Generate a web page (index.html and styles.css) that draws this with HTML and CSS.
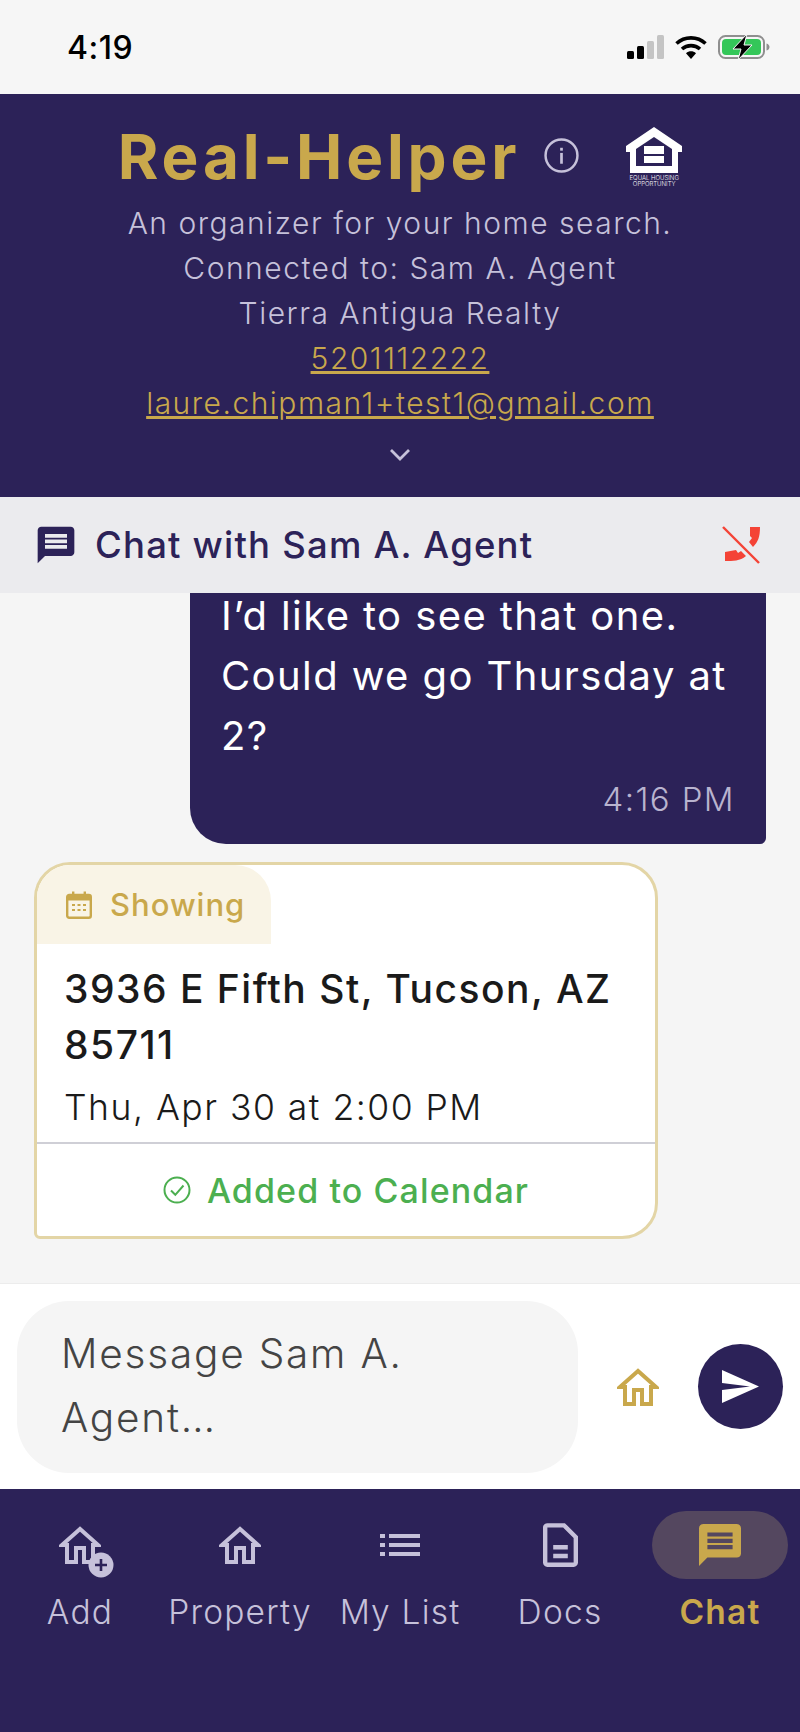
FILE: index.html
```html
<!DOCTYPE html>
<html lang="en">
<head>
    <meta charset="UTF-8">
    <title>Real-Helper | Chat</title>
    <link rel="stylesheet" href="styles.css">
</head>
<body>

<!-- Status bar -->
<div class="status-bar">
    <span class="status-time">4:19</span>
    <div class="status-icons">
        <svg class="signal" viewBox="0 0 37 24" width="37" height="24">
            <rect x="0" y="16" width="7" height="8" rx="1.5" fill="#000"/>
            <rect x="10" y="11" width="7" height="13" rx="1.5" fill="#000"/>
            <rect x="20" y="6" width="7" height="18" rx="1.5" fill="#c4c4c4"/>
            <rect x="30" y="0" width="7" height="24" rx="1.5" fill="#c4c4c4"/>
        </svg>
        <svg class="wifi" viewBox="0 0 32 24" width="32" height="24">
            <path d="M1.5 8.5C9.5 1 22.5 1 30.5 8.5" fill="none" stroke="#000" stroke-width="3.6"/>
            <path d="M7 14C12 9.5 20 9.5 25 14" fill="none" stroke="#000" stroke-width="3.6"/>
            <path d="M11 18.2C14 15.6 18 15.6 21 18.2L16 24Z" fill="#000"/>
        </svg>
        <svg class="battery" viewBox="0 0 52 26" width="52" height="26">
            <rect x="1" y="2" width="45" height="22" rx="6.5" fill="none" stroke="#8f8f8f" stroke-width="2"/>
            <rect x="4" y="5" width="39" height="16" rx="4" fill="#34c759"/>
            <path d="M48.5 9.5c2 .5 3 2 3 3.500s-1 3-3 3.500z" fill="#8f8f8f"/>
            <path d="M29 0L15 15h8l-3 11 14-15h-8z" fill="#000" stroke="#f6f6f6" stroke-width="1"/>
        </svg>
    </div>
</div>

<!-- Agent header -->
<header class="agent-header">
    <div class="title-row">
        <h1>Real-Helper</h1>
        <svg class="info-icon" viewBox="0 0 34 34" width="35" height="35">
            <circle cx="17" cy="17" r="15.500" fill="none" stroke="#c6c1da" stroke-width="2.400"/>
            <rect x="15.700" y="14.500" width="2.600" height="10.500" fill="#c6c1da"/>
            <rect x="15.700" y="9.500" width="2.600" height="2.800" fill="#c6c1da"/>
        </svg>
        <div class="fair-housing">
            <svg viewBox="0 0 56 46" width="56" height="46">
                <path d="M28 0L56 19v6h-4v21H4V25H0v-6z" fill="#fff"/>
                <path d="M28 10L10 22v17h36V22z" fill="#2c2258"/>
                <rect x="18" y="19" width="20" height="8" fill="#fff"/>
                <rect x="18" y="29" width="20" height="7" fill="#fff"/>
            </svg>
            <span>EQUAL HOUSING<br>OPPORTUNITY</span>
        </div>
    </div>
    <p>An organizer for your home search.</p>
    <p>Connected to: Sam A. Agent</p>
    <p>Tierra Antigua Realty</p>
    <p><a href="#">5201112222</a></p>
    <p><a href="#">laure.chipman1+test1@gmail.com</a></p>
    <svg class="chevron" viewBox="0 0 22 13" width="22" height="13">
        <path d="M2 2l9 9 9-9" fill="none" stroke="#c6c1da" stroke-width="2.800"/>
    </svg>
</header>

<!-- Chat title -->
<div class="chat-title">
    <svg viewBox="0 0 24 24" width="44" height="44">
        <path fill="#2c2258" d="M20 2H4c-1.100 0-1.990.9-1.990 2L2 22l4-4h14c1.100 0 2-.9 2-2V4c0-1.100-.9-2-2-2zm-2 12H6v-2h12v2zm0-3H6V9h12v2zm0-3H6V6h12v2z"/>
    </svg>
    <span class="chat-name">Chat with Sam A. Agent</span>
    <svg class="phone-off" viewBox="22 16 40 40" width="40" height="40">
        <path fill="#f44336" d="M50 18h10c0 10-2 15-7 20l-4-5 3-4-2-2zM25 43l11-2 2 3 3-2 5 5c-6 5-13 5-21 5z"/>
        <path d="M23 18l36 36" fill="none" stroke="#f44336" stroke-width="2.400"/>
    </svg>
</div>

<!-- Messages -->
<main class="messages">
    <div class="bubble">
        <p>I’d like to see that one. Could we go Thursday at 2?</p>
        <span class="bubble-time">4:16 PM</span>
    </div>
    <div class="showing-card">
        <div class="showing-tag">
            <svg viewBox="0 0 26 28" width="26" height="28">
                <rect x="1.200" y="4" width="23.600" height="22.800" rx="2" fill="none" stroke="#c9a84c" stroke-width="2.400"/>
                <rect x="1.200" y="4" width="23.600" height="5.500" fill="#c9a84c"/>
                <rect x="6" y="0.500" width="2.400" height="5" fill="#c9a84c"/>
                <rect x="17.600" y="0.500" width="2.400" height="5" fill="#c9a84c"/>
                <path d="M6 14h3M11.500 14h3M17 14h3M6 19h3M11.500 19h3M17 19h3" stroke="#c9a84c" stroke-width="2" fill="none"/>
            </svg>
            <span>Showing</span>
        </div>
        <div class="showing-body">
            <div class="showing-address">3936 E Fifth St, Tucson, AZ 85711</div>
            <div class="showing-date">Thu, Apr 30 at 2:00 PM</div>
        </div>
        <div class="showing-status">
            <svg viewBox="0 0 28 28" width="28" height="28">
                <circle cx="14" cy="14" r="12.500" fill="none" stroke="#4caf50" stroke-width="2"/>
                <path d="M8 14.500l4.300 4.300L20.500 9.500" fill="none" stroke="#4caf50" stroke-width="2"/>
            </svg>
            <span>Added to Calendar</span>
        </div>
    </div>
</main>

<!-- Composer -->
<div class="composer">
    <div class="composer-input">Message Sam A. Agent…</div>
    <svg class="composer-home" viewBox="0 0 42 38" width="42" height="38">
        <path d="M21 3L3 19h5v17h9V22h8v14h9V19h5z" fill="none" stroke="#c9a84c" stroke-width="4"/>
    </svg>
    <div class="send-button">
        <svg viewBox="0 0 37 33" width="37" height="33">
            <path d="M0 0L37 16.500 0 33V20l28-3.500L0 13z" fill="#fff"/>
        </svg>
    </div>
</div>

<!-- Bottom tabs -->
<nav class="tabs">
    <div class="tab">
        <div class="tab-icon">
            <svg viewBox="0 0 42 38" width="42" height="38">
                <path d="M21 3L3 19h5v17h9V22h8v14h9V19h5z" fill="none" stroke="#c6c1da" stroke-width="4"/>
            </svg>
            <svg class="tab-badge" viewBox="0 0 26 26" width="26" height="26">
                <circle cx="13" cy="13" r="12.500" fill="#c6c1da"/>
                <path d="M13 7v12M7 13h12" stroke="#2c2258" stroke-width="2.600"/>
            </svg>
        </div>
        <span>Add</span>
    </div>
    <div class="tab">
        <div class="tab-icon">
            <svg viewBox="0 0 42 38" width="42" height="38">
                <path d="M21 3L3 19h5v17h9V22h8v14h9V19h5z" fill="none" stroke="#c6c1da" stroke-width="4"/>
            </svg>
        </div>
        <span>Property</span>
    </div>
    <div class="tab">
        <div class="tab-icon">
            <svg viewBox="0 0 40 22" width="40" height="22">
                <path fill="#c6c1da" d="M0 0h5v4H0zM9 0h31v4H9zM0 9h5v4H0zM9 9h31v4H9zM0 18h5v4H0zM9 18h31v4H9z"/>
            </svg>
        </div>
        <span>My List</span>
    </div>
    <div class="tab">
        <div class="tab-icon">
            <svg viewBox="0 0 24 30" width="35" height="44">
                <path fill="#c6c1da" d="M15 0H3C1.300 0 0 1.300 0 3v24c0 1.700 1.300 3 3 3h18c1.700 0 3-1.300 3-3V9zm6 27H3V3h10.800L21 10.200z"/>
                <path fill="#c6c1da" d="M7 15h10v3H7zM7 21h10v3H7z"/>
            </svg>
        </div>
        <span>Docs</span>
    </div>
    <div class="tab active">
        <div class="tab-icon">
            <svg viewBox="2 2 20 20" width="42" height="42">
                <path fill="#c9a84c" d="M20 2H4c-1.100 0-1.990.9-1.990 2L2 22l4-4h14c1.100 0 2-.9 2-2V4c0-1.100-.9-2-2-2zm-2 12H6v-2h12v2zm0-3H6V9h12v2zm0-3H6V6h12v2z"/>
            </svg>
        </div>
        <span>Chat</span>
    </div>
</nav>

</body>
</html>
```

FILE: styles.css
```css
* {
    box-sizing: border-box;
}

body {
    font-family: 'Inter', 'Liberation Sans', sans-serif;
    margin: 0;
    width: 800px;
    height: 1732px;
    display: flex;
    flex-direction: column;
    overflow: hidden;
    background: #f5f5f5;
}

/* Status bar */
.status-bar {
    height: 94px;
    flex-shrink: 0;
    background: #f6f6f6;
    display: flex;
    align-items: center;
    justify-content: space-between;
    padding: 0 30px 0 67px;
}
.status-time {
    font-size: 32px;
    font-weight: 500;
    letter-spacing: 0.5px;
    color: #000;
}
.status-icons {
    display: flex;
    align-items: center;
    gap: 11px;
}
.status-icons svg {
    display: block;
}

/* Agent header */
.agent-header {
    height: 403px;
    flex-shrink: 0;
    background: #2c2258;
    padding-top: 27px;
    text-align: center;
    color: #c6c1da;
}
.title-row {
    display: flex;
    justify-content: center;
    align-items: center;
    height: 72px;
    margin-bottom: 8px;
}
h1 {
    margin: 0;
    font-size: 62px;
    line-height: 72px;
    font-weight: 700;
    letter-spacing: 3.800px;
    color: #c9a84c;
}
.info-icon {
    margin: 0 47px 4px 24px;
}
.fair-housing {
    display: flex;
    flex-direction: column;
    align-items: center;
    color: #fff;
    font-size: 6px;
    line-height: 6px;
    font-weight: 300;
}
.fair-housing svg {
    display: block;
    margin-bottom: 2px;
}
.agent-header p {
    margin: 0;
    font-size: 30px;
    line-height: 45px;
    font-weight: 300;
    letter-spacing: 1.500px;
}
.agent-header a {
    color: #c9a84c;
}
.chevron {
    display: block;
    margin: 22px auto 0;
}

/* Chat title */
.chat-title {
    height: 96px;
    flex-shrink: 0;
    background: #ebebee;
    display: flex;
    align-items: center;
    padding: 0 38px 0 34px;
    color: #2c2258;
}
.chat-name {
    font-size: 36.500px;
    font-weight: 500;
    letter-spacing: 1.200px;
    margin-left: 17px;
    flex: 1;
}

/* Messages */
.messages {
    flex: 1;
    min-height: 0;
    overflow: hidden;
    display: flex;
    flex-direction: column;
    justify-content: flex-end;
    padding: 0 35px 44px;
}
.bubble {
    flex-shrink: 0;
    align-self: flex-end;
    width: 576px;
    margin-right: -1px;
    background: #2c2258;
    color: #fff;
    border-radius: 36px 36px 6px 36px;
    padding: 40px 31px 22px;
    font-size: 40px;
    line-height: 60px;
    letter-spacing: 1.400px;
    font-weight: 400;
}
.bubble p {
    margin: 0;
}
.bubble-time {
    display: block;
    text-align: right;
    font-size: 33px;
    line-height: 46px;
    font-weight: 300;
    margin-top: 10px;
    color: #b9b4cf;
}
.showing-card {
    flex-shrink: 0;
    margin: 18px 0 0 -1px;
    width: 624px;
    height: 377px;
    background: #fff;
    border: 3px solid #e3d5a6;
    border-radius: 36px 36px 36px 6px;
    overflow: hidden;
}
.showing-tag {
    width: 234px;
    height: 79px;
    background: #f9f4e6;
    border-top-right-radius: 36px;
    display: flex;
    align-items: center;
    padding-left: 29px;
    gap: 18px;
    color: #c9a84c;
    font-size: 31px;
    font-weight: 500;
    letter-spacing: 1px;
}
.showing-body {
    height: 200px;
    padding: 17px 27px 0;
    color: #1a1a1a;
    border-bottom: 2px solid #cfcfd6;
}
.showing-address {
    font-size: 39px;
    line-height: 56px;
    font-weight: 500;
    letter-spacing: 1.500px;
}
.showing-date {
    margin-top: 5px;
    font-size: 35.500px;
    line-height: 60px;
    font-weight: 300;
    letter-spacing: 1.500px;
}
.showing-status {
    height: 92px;
    display: flex;
    align-items: center;
    justify-content: center;
    gap: 16px;
    color: #4caf50;
    font-size: 34px;
    font-weight: 500;
    letter-spacing: 1.100px;
}

/* Composer */
.composer {
    height: 206px;
    flex-shrink: 0;
    background: #fff;
    border-top: 1px solid #ececec;
    display: flex;
    align-items: center;
    padding: 0 17px;
}
.composer-input {
    width: 561px;
    height: 172px;
    background: #f5f5f5;
    border-radius: 52px;
    padding: 21px 44px;
    font-size: 40.500px;
    line-height: 64px;
    font-weight: 300;
    letter-spacing: 1.800px;
    color: #444;
}
.composer-home {
    margin-left: 39px;
}
.send-button {
    width: 85px;
    height: 85px;
    border-radius: 50%;
    background: #2c2258;
    margin-left: 39px;
    display: flex;
    align-items: center;
    justify-content: center;
}

/* Bottom tabs */
.tabs {
    height: 243px;
    flex-shrink: 0;
    background: #2c2258;
    display: grid;
    grid-template-columns: repeat(5, 1fr);
    padding-top: 22px;
}
.tab {
    display: flex;
    flex-direction: column;
    align-items: center;
    color: #c6c1da;
    font-size: 33.500px;
    font-weight: 300;
    letter-spacing: 1.200px;
}
.tab-icon {
    position: relative;
    width: 136px;
    height: 68px;
    display: flex;
    align-items: center;
    justify-content: center;
    margin-bottom: 13px;
}
.tab-badge {
    position: absolute;
    left: 76px;
    top: 41px;
}
.tab.active {
    color: #c9a84c;
    font-weight: 600;
}
.tab.active .tab-icon {
    background: #54475f;
    border-radius: 34px;
}
```
